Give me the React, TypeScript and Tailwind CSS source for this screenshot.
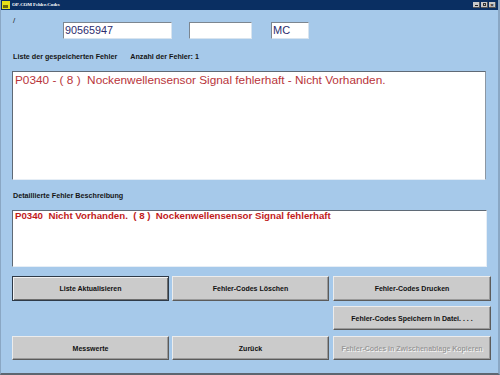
import React from "react";

const Btn = ({
  label,
  w,
  h,
  ml = 0,
  focused = false,
  disabled = false,
}: {
  label: string;
  w: string;
  h: string;
  ml?: number;
  focused?: boolean;
  disabled?: boolean;
}) => {
  const base =
    "flex items-center justify-center bg-[#cbcbcb] text-[7px] font-bold leading-[9px] " +
    w +
    " " +
    h;
  const border = focused
    ? " border border-[#2e3a48] shadow-[inset_1px_1px_0_#f2f2f2,inset_-1px_-1px_0_#6e6e6e]"
    : " border border-t-[#ececec] border-l-[#ececec] border-b-[#5b5b5b] border-r-[#5b5b5b] shadow-[inset_-1px_-1px_0_#9a9a9a]";
  const text = disabled
    ? " text-[#9a9a9a] [text-shadow:1px_1px_0_#f4f4f4]"
    : " text-[#111]";
  return (
    <div className={base + border + text} style={{ marginLeft: ml }}>
      {label}
    </div>
  );
};

export default function App() {
  return (
    <div className="w-[500px] h-[375px] overflow-hidden bg-[#a6c9ea] flex flex-col font-['Liberation_Sans',Arial,sans-serif] border-l border-l-[#8aa7c4] border-r-2 border-r-[#8aa7c4] border-b-2 border-b-[#5d6670]">
      {/* title bar */}
      <div className="h-[10px] bg-[#0a2f62] flex items-center shrink-0">
        <div className="ml-[1px] w-[8px] h-[8px] bg-[#e7e21a] flex items-end justify-start">
          <div className="w-[5px] h-[3px] bg-[#6b6a10] ml-[1px] mb-[1px]" />
        </div>
        <span className="ml-[2px] text-white text-[5px] font-bold leading-[8px] font-['Liberation_Serif',serif] tracking-[-0.15px]">
          OP-COM Fehler-Codes
        </span>
        <div className="ml-auto mr-[2px] flex gap-[1px]">
          <div className="w-[7px] h-[6px] bg-[#c9c9c9] border-b border-r border-[#555] flex items-end justify-center">
            <div className="w-[3px] h-[1px] bg-[#222] mb-[1px]" />
          </div>
          <div className="w-[7px] h-[6px] bg-[#c9c9c9] border-b border-r border-[#555] flex items-center justify-center">
            <div className="w-[3px] h-[3px] border border-[#333]" />
          </div>
          <div className="w-[7px] h-[6px] bg-[#c9c9c9] border-b border-r border-[#555] flex items-center justify-center">
            <span className="text-[6px] leading-[6px] font-bold text-[#111]">×</span>
          </div>
        </div>
      </div>

      <div className="flex flex-col pl-[11px]">
        {/* row 1 */}
        <div className="mt-[12px] flex items-start h-[16px]">
          <div className="w-[51px] relative">
            <span className="absolute left-[1px] top-[-5px] text-[8px] leading-[8px] text-[#222]">/</span>
          </div>
          <div className="w-[109px] h-[17px] bg-white border border-t-[#7c8690] border-l-[#7c8690] border-b-[#d8e4ef] border-r-[#d8e4ef] pl-[1px] text-[10.8px] leading-[15px] text-[#2c2c6e]">
            90565947
          </div>
          <div className="ml-[17px] w-[63px] h-[17px] bg-white border border-t-[#7c8690] border-l-[#7c8690] border-b-[#d8e4ef] border-r-[#d8e4ef]" />
          <div className="ml-[19px] w-[38px] h-[17px] bg-white border border-t-[#7c8690] border-l-[#7c8690] border-b-[#d8e4ef] border-r-[#d8e4ef] pl-[1px] text-[11px] leading-[15px] text-[#2c2c6e]">
            MC
          </div>
        </div>

        {/* labels */}
        <div className="mt-[14px] h-[9px] flex text-[7.2px] font-bold leading-[9px] text-[#151515]">
          <span className="ml-[1px]">Liste der gespeicherten Fehler</span>
          <span className="ml-[13px]">Anzahl der Fehler: 1</span>
        </div>

        {/* textarea 1 */}
        <div className="mt-[10px] w-[474px] h-[109px] bg-white border border-t-[#5f6a76] border-l-[#5f6a76] border-b-[#e6eef6] border-r-[#8c97a3] pl-[2px] pt-[1px] text-[11.8px] leading-[14px] text-[#b8343a]">
          P0340 - ( 8 )&nbsp; Nockenwellensensor Signal fehlerhaft - Nicht Vorhanden.
        </div>

        {/* label 2 */}
        <div className="mt-[11px] h-[9px] text-[7.2px] font-bold leading-[9px] text-[#151515] ml-[1px]">
          Detaillierte Fehler Beschreibung
        </div>

        {/* textarea 2 */}
        <div className="mt-[10px] w-[475px] h-[57px] bg-white border border-t-[#5f6a76] border-l-[#5f6a76] border-b-[#e6eef6] border-r-[#e6eef6] pl-[2px] text-[9.7px] font-bold leading-[11px] text-[#c21c1c]">
          <div className="-mt-[1px]">P0340&nbsp; Nicht Vorhanden.&nbsp; ( 8 )&nbsp; Nockenwellensensor Signal fehlerhaft</div>
        </div>

        {/* buttons */}
        <div className="mt-[9px] flex">
          <Btn label="Liste Aktualisieren" w="w-[157px]" h="h-[25px]" focused />
          <Btn label="Fehler-Codes Löschen" w="w-[157px]" h="h-[25px]" ml={3} />
          <Btn label="Fehler-Codes Drucken" w="w-[158px]" h="h-[25px]" ml={4} />
        </div>
        <div className="mt-[5px] flex">
          <Btn label="Fehler-Codes Speichern in Datei. . . ." w="w-[158px]" h="h-[24px]" ml={321} />
        </div>
        <div className="mt-[6px] flex">
          <Btn label="Messwerte" w="w-[157px]" h="h-[24px]" />
          <Btn label="Zurück" w="w-[157px]" h="h-[24px]" ml={3} />
          <Btn label="Fehler-Codes in Zwischenablage Kopieren" w="w-[158px]" h="h-[24px]" ml={4} disabled />
        </div>
      </div>
    </div>
  );
}
